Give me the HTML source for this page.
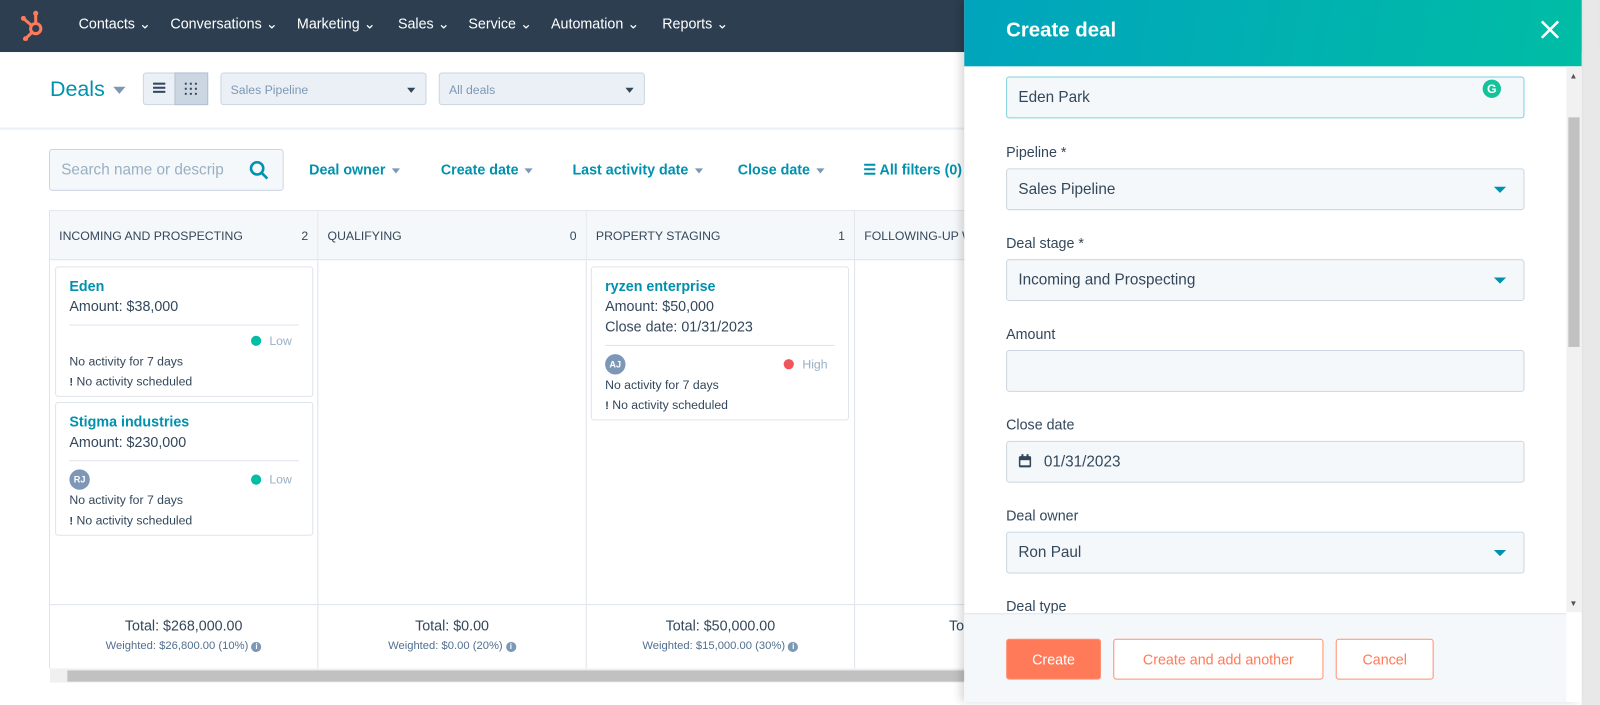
<!DOCTYPE html><html><head><style>
*{box-sizing:border-box;margin:0;padding:0}
body{width:1600px;height:705px;overflow:hidden;position:relative;background:#fff;font-family:"Liberation Sans",sans-serif;color:#33475b}
#w{position:absolute;left:0;top:0;width:1568px;height:691px;transform:scale(1.0204);transform-origin:0 0}
.a{position:absolute}
.nav{left:0;top:0;width:1568px;height:51px;background:#2d3e50}
.nav span{position:absolute;top:15px;color:#fff;font-size:14px}
.sel{background:#eaf0f6;border:1px solid #cbd6e2;border-radius:3px;font-size:12px;color:#7c98b6;padding:9px 9px}
.f{color:#0091ae;font-size:14px;font-weight:bold;top:158px;white-space:nowrap}
.tri{display:inline-block;width:0;height:0;border-left:4px solid transparent;border-right:4px solid transparent;border-top:5px solid #7c98b6;vertical-align:middle;margin-left:6px}
.col{top:207px;height:448px;border-left:1px solid #dfe3eb;width:263px}
.ch{top:207px;height:48px;background:#f5f8fa;border-bottom:1px solid #dfe3eb;font-size:12px;padding:17px 9px;color:#33475b;white-space:nowrap;overflow:hidden}
.card{border:1px solid #dfe3eb;border-radius:3px;background:#fff;padding:8px 13px;font-size:14px;line-height:20px}
.card b{color:#0091ae;font-size:14px}
.card .s{font-size:12px;line-height:15px}
.card hr{border:0;border-top:1px solid #dfe3eb;margin:8px 0}
.dot{display:inline-block;width:10px;height:10px;border-radius:50%;margin-right:8px;vertical-align:-1px}
.tot{top:592px;height:63px;border-top:1px solid #dfe3eb;text-align:center;font-size:14px;padding-top:12px}
.tot div{font-size:11px;color:#516f90;margin-top:6px}
.i{display:inline-block;width:10px;height:10px;border-radius:50%;background:#7c98b6;color:#fff;font-size:8px;line-height:10px;text-align:center;font-weight:bold}
.av{display:inline-block;width:20px;height:20px;border-radius:50%;background:#7c98b6;color:#fff;font-size:9px;line-height:20px;text-align:center;font-weight:bold}
.lbl{left:986px;font-size:14px;color:#33475b}
.inp{left:986px;width:508px;height:41px;background:#f5f8fa;border:1px solid #cbd6e2;border-radius:3px;font-size:15px;padding:11px 11px;color:#33475b}
.dd::after{content:"";position:absolute;right:17px;top:17px;border-left:6px solid transparent;border-right:6px solid transparent;border-top:6px solid #0091ae}
.btn{top:626px;height:40px;border:1px solid #ff8f73;border-radius:3px;font-size:14px;color:#ff7a59;text-align:center;line-height:38px;background:#fff}
</style></head><body><div id="w">
<div class="a nav">
<svg class="a" style="left:20px;top:10px" width="26" height="30" viewBox="0 0 26 30"><g fill="none" stroke="#ff7a59" stroke-width="3"><circle cx="15" cy="18" r="5"/><line x1="15" y1="13" x2="15" y2="4"/><line x1="11" y1="15" x2="4" y2="9"/><line x1="11" y1="22" x2="6" y2="27"/></g><circle cx="15" cy="3" r="2.5" fill="#ff7a59"/><circle cx="3" cy="8" r="2.5" fill="#ff7a59"/><circle cx="5" cy="28" r="2.5" fill="#ff7a59"/></svg>
<span style="left:77px">Contacts ⌄</span><span style="left:167px">Conversations ⌄</span><span style="left:291px">Marketing ⌄</span><span style="left:390px">Sales ⌄</span><span style="left:459px">Service ⌄</span><span style="left:540px">Automation ⌄</span><span style="left:649px">Reports ⌄</span>
</div>
<div class="a" style="left:49px;top:76px;font-size:21px;color:#0091ae">Deals <span class="tri" style="border-left-width:6px;border-right-width:6px;border-top-width:7px;margin-left:2px"></span></div>
<div class="a" style="left:140px;top:71px;width:64px;height:32px;border:1px solid #cbd6e2;border-radius:3px;background:#eaf0f6"></div>
<div class="a" style="left:171px;top:71px;width:33px;height:32px;background:#cbd6e2;border:1px solid #b0c1d4"></div>
<div class="a" style="left:150px;top:81px;width:12px;height:2px;background:#33475b;box-shadow:0 4px #33475b,0 8px #33475b"></div>
<svg class="a" style="left:181px;top:81px" width="12" height="12"><g fill="#33475b"><rect x="0" y="0" width="2" height="2"/><rect x="5" y="0" width="2" height="2"/><rect x="10" y="0" width="2" height="2"/><rect x="0" y="5" width="2" height="2"/><rect x="5" y="5" width="2" height="2"/><rect x="10" y="5" width="2" height="2"/><rect x="0" y="10" width="2" height="2"/><rect x="5" y="10" width="2" height="2"/><rect x="10" y="10" width="2" height="2"/></g></svg>
<div class="a sel" style="left:216px;top:71px;width:202px;height:32px">Sales Pipeline<span class="tri a" style="right:10px;top:14px;border-top-color:#33475b"></span></div>
<div class="a sel" style="left:430px;top:71px;width:202px;height:32px">All deals<span class="tri a" style="right:10px;top:14px;border-top-color:#33475b"></span></div>
<div class="a" style="left:0;top:125px;width:945px;height:2px;background:#eaf0f6"></div>
<div class="a" style="left:48px;top:146px;width:230px;height:41px;border:1px solid #cbd6e2;border-radius:3px;background:#f5f8fa;font-size:15px;color:#99afc4;padding:11px 11px;white-space:nowrap;overflow:hidden">Search name or descrip</div>
<svg class="a" style="left:244px;top:157px" width="20" height="20"><circle cx="8" cy="8" r="6" fill="none" stroke="#0091ae" stroke-width="2.5"/><line x1="12.5" y1="12.5" x2="18" y2="18" stroke="#0091ae" stroke-width="2.5"/></svg>
<div class="a f" style="left:303px">Deal owner<span class="tri"></span></div>
<div class="a f" style="left:432px">Create date<span class="tri"></span></div>
<div class="a f" style="left:561px">Last activity date<span class="tri"></span></div>
<div class="a f" style="left:723px">Close date<span class="tri"></span></div>
<div class="a f" style="left:846px">☰ All filters (0)</div>
<div class="a" style="left:48px;top:206px;width:900px;height:1px;background:#dfe3eb"></div>
<div class="a col" style="left:48px"></div><div class="a col" style="left:311px"></div><div class="a col" style="left:574px"></div><div class="a col" style="left:837px"></div>
<div class="a ch" style="left:49px;width:262px">INCOMING AND PROSPECTING<span style="float:right">2</span></div>
<div class="a ch" style="left:312px;width:262px">QUALIFYING<span style="float:right">0</span></div>
<div class="a ch" style="left:575px;width:262px">PROPERTY STAGING<span style="float:right">1</span></div>
<div class="a ch" style="left:838px;width:110px">FOLLOWING-UP W</div>
<div class="a card" style="left:54px;top:261px;width:253px;height:128px"><b>Eden</b><br>Amount: $38,000<hr><div class="s" style="text-align:right;color:#99afc4;padding-right:7px"><span class="dot" style="background:#00bda5"></span>Low</div><div class="s" style="margin-top:5px">No activity for 7 days</div><div class="s" style="margin-top:5px"><b style="color:#33475b;font-size:11px">!</b> No activity scheduled</div></div>
<div class="a card" style="left:54px;top:394px;width:253px;height:131px"><b>Stigma industries</b><br>Amount: $230,000<hr><div class="s" style="color:#99afc4;padding-right:7px"><span class="av">RJ</span><span style="float:right;margin-top:3px"><span class="dot" style="background:#00bda5"></span>Low</span></div><div class="s" style="margin-top:3px">No activity for 7 days</div><div class="s" style="margin-top:5px"><b style="color:#33475b;font-size:11px">!</b> No activity scheduled</div></div>
<div class="a card" style="left:579px;top:261px;width:253px;height:151px"><b>ryzen enterprise</b><br>Amount: $50,000<br>Close date: 01/31/2023<hr><div class="s" style="color:#99afc4;padding-right:7px"><span class="av">AJ</span><span style="float:right;margin-top:3px"><span class="dot" style="background:#f2545b"></span>High</span></div><div class="s" style="margin-top:3px">No activity for 7 days</div><div class="s" style="margin-top:5px"><b style="color:#33475b;font-size:11px">!</b> No activity scheduled</div></div>
<div class="a tot" style="left:49px;width:262px">Total: $268,000.00<div>Weighted: $26,800.00 (10%) <span class="i">i</span></div></div>
<div class="a tot" style="left:312px;width:262px">Total: $0.00<div>Weighted: $0.00 (20%) <span class="i">i</span></div></div>
<div class="a tot" style="left:575px;width:262px">Total: $50,000.00<div>Weighted: $15,000.00 (30%) <span class="i">i</span></div></div>
<div class="a tot" style="left:838px;width:110px;text-align:left;padding-left:92px">To</div>
<div class="a" style="left:49px;top:655px;width:900px;height:14px;background:#f0f0f0"></div>
<div class="a" style="left:66px;top:657px;width:880px;height:11px;background:#c1c1c1"></div>
<div class="a" style="left:1550px;top:0;width:18px;height:691px;background:#e8e8e8"></div>
<div class="a" style="left:945px;top:0;width:605px;height:688px;background:#fff;box-shadow:-4px 0 8px rgba(0,0,0,.15)"></div>
<div class="a" style="left:945px;top:0;width:605px;height:65px;background:linear-gradient(100deg,#00a4bd,#00bda5)"></div>
<div class="a" style="left:986px;top:19px;font-size:20px;color:#fff;font-weight:bold">Create deal</div>
<svg class="a" style="left:1510px;top:20px" width="18" height="18"><path d="M1 1L17 17M17 1L1 17" stroke="#fff" stroke-width="2.5"/></svg>
<div class="a" style="left:1535px;top:65px;width:15px;height:535px;background:#f1f1f1"></div>
<div class="a" style="left:1537px;top:115px;width:11px;height:225px;background:#c1c1c1"></div>
<div class="a" style="left:1538px;top:70px;font-size:8px;color:#555">▲</div>
<div class="a" style="left:1538px;top:587px;font-size:8px;color:#555">▼</div>
<div class="a inp" style="top:75px;border-color:#7fd1de">Eden Park</div>
<div class="a" style="left:1453px;top:78px;width:18px;height:18px;border-radius:50%;background:#15c39a;color:#fff;font-size:12px;font-weight:bold;text-align:center;line-height:18px">G</div>
<div class="a lbl" style="top:141px">Pipeline *</div>
<div class="a inp dd" style="top:165px">Sales Pipeline</div>
<div class="a lbl" style="top:230px">Deal stage *</div>
<div class="a inp dd" style="top:254px">Incoming and Prospecting</div>
<div class="a lbl" style="top:319px">Amount</div>
<div class="a inp" style="top:343px"></div>
<div class="a lbl" style="top:408px">Close date</div>
<div class="a inp" style="top:432px;padding-left:36px">01/31/2023</div>
<svg class="a" style="left:998px;top:445px" width="13" height="14"><rect x="0.5" y="2" width="12" height="11" rx="1.5" fill="#33475b"/><rect x="2" y="6" width="9" height="5" fill="#f5f8fa"/><rect x="3" y="0" width="2" height="3" fill="#33475b"/><rect x="8" y="0" width="2" height="3" fill="#33475b"/></svg>
<div class="a lbl" style="top:497px">Deal owner</div>
<div class="a inp dd" style="top:521px">Ron Paul</div>
<div class="a lbl" style="top:586px">Deal type</div>
<div class="a" style="left:945px;top:601px;width:590px;height:87px;background:#f5f8fa;border-top:1px solid #dfe3eb"></div>
<div class="a btn" style="left:986px;width:93px;background:#ff7a59;color:#fff">Create</div>
<div class="a btn" style="left:1091px;width:206px">Create and add another</div>
<div class="a btn" style="left:1309px;width:96px">Cancel</div>
</div></body></html>
